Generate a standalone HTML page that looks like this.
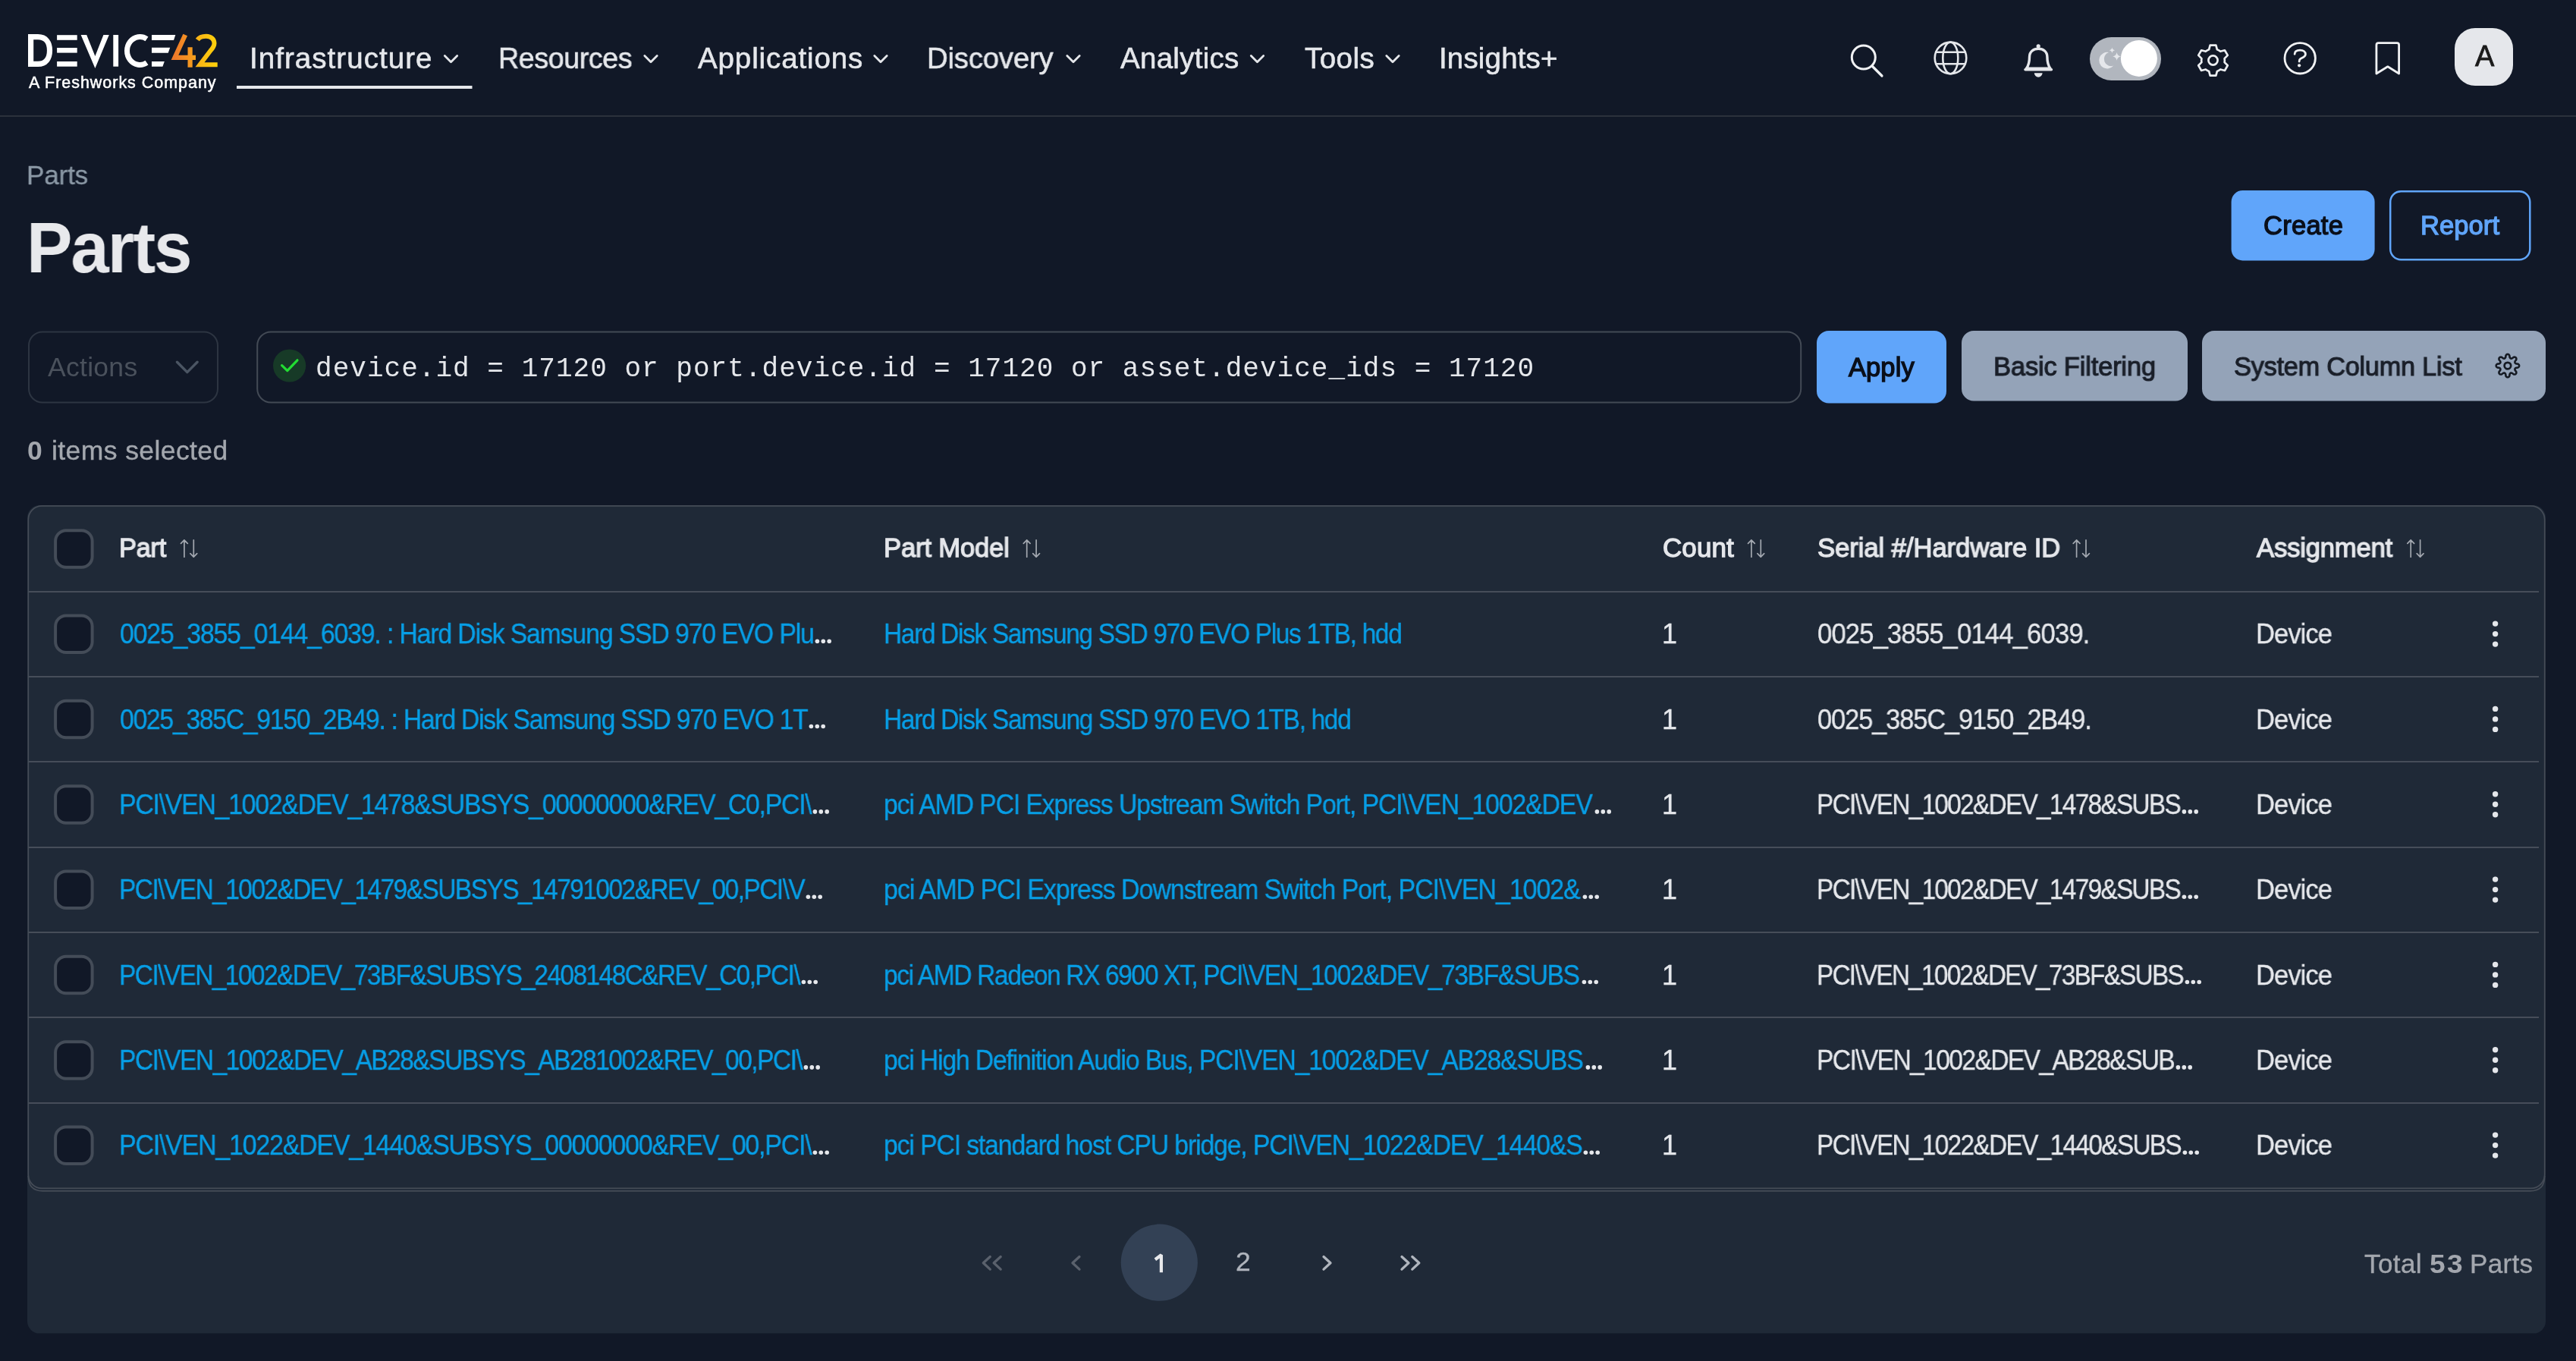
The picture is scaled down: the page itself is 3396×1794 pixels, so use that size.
<!DOCTYPE html>
<html><head><meta charset="utf-8"><title>Parts</title>
<style>
html,body{margin:0;padding:0;background:#111827;width:3396px;height:1794px;overflow:hidden}
.s{position:absolute;left:0;top:0}
.t{position:absolute;white-space:pre;will-change:transform}
</style></head><body>
<svg class="s" width="3396" height="1794" viewBox="0 0 3396 1794"><rect x="0" y="152" width="3396" height="2" fill="#2b313c"/>
<rect x="312" y="113" width="310.5" height="4" fill="#e5e7eb"/>
<path d="M586.3 73.6 L594.5 81.8 L602.7 73.6" fill="none" stroke="#e5e7eb" stroke-width="2.8" stroke-linecap="round" stroke-linejoin="round"/>
<path d="M849.8 73.6 L858.0 81.8 L866.2 73.6" fill="none" stroke="#e5e7eb" stroke-width="2.8" stroke-linecap="round" stroke-linejoin="round"/>
<path d="M1152.8 73.6 L1161.0 81.8 L1169.2 73.6" fill="none" stroke="#e5e7eb" stroke-width="2.8" stroke-linecap="round" stroke-linejoin="round"/>
<path d="M1406.8 73.6 L1415.0 81.8 L1423.2 73.6" fill="none" stroke="#e5e7eb" stroke-width="2.8" stroke-linecap="round" stroke-linejoin="round"/>
<path d="M1649.3 73.6 L1657.5 81.8 L1665.7 73.6" fill="none" stroke="#e5e7eb" stroke-width="2.8" stroke-linecap="round" stroke-linejoin="round"/>
<path d="M1827.8 73.6 L1836.0 81.8 L1844.2 73.6" fill="none" stroke="#e5e7eb" stroke-width="2.8" stroke-linecap="round" stroke-linejoin="round"/>
<path d="M40.6 48.7 L50 48.7 C60.5 48.7 65.5 56 65.5 66.5 C65.5 77 60.5 84.4 50 84.4 L40.6 84.4 Z" fill="none" stroke="#ffffff" stroke-width="7.2"/>
<rect x="75.1" y="46.2" width="26.6" height="6.6" fill="#ffffff"/><rect x="75.1" y="63" width="26.6" height="6.6" fill="#ffffff"/><rect x="75.1" y="81" width="26.6" height="6.7" fill="#ffffff"/>
<polygon points="106.6,46 114.2,46 125.4,74 136.4,46 143.8,46 125.4,90" fill="#ffffff"/>
<rect x="149.3" y="46" width="6.8" height="41.7" fill="#ffffff"/>
<path d="M193.5 51.3 A17 18.5 0 1 0 193.5 82.7" fill="none" stroke="#ffffff" stroke-width="7"/>
<polygon points="200,45.9 231.3,45.9 229,52.9 200,52.9" fill="#ffffff"/><polygon points="200,62.7 224.2,62.7 221.7,69.8 200,69.8" fill="#ffffff"/><polygon points="200,80.9 216.8,80.9 214.4,87.7 200,87.7" fill="#ffffff"/>
<defs><linearGradient id="lg4" x1="0" y1="0" x2="1" y2="0"><stop offset="0" stop-color="#ef7a2a"/><stop offset="1" stop-color="#f7a21c"/></linearGradient><linearGradient id="lg2" x1="0" y1="0" x2="1" y2="0"><stop offset="0" stop-color="#f9b316"/><stop offset="1" stop-color="#fdd20b"/></linearGradient></defs>
<path d="M244.2 46 L230.5 75.8 L258 75.8 M250.6 62.2 L250.6 88.8" fill="none" stroke="url(#lg4)" stroke-width="6.2" stroke-linejoin="miter"/>
<path d="M260.3 52.5 C263 48.5 267 47.8 271.8 47.8 C278.5 47.8 282.5 52 282.5 57 C282.5 61 280.5 63.5 277.5 66.8 L263.5 85.3 L286.7 85.3" fill="none" stroke="url(#lg2)" stroke-width="6" stroke-linejoin="miter"/>
<circle cx="2456.8" cy="75.6" r="15.5" fill="none" stroke="#f0f1f3" stroke-width="3"/><path d="M2468 87 L2481 100" stroke="#f0f1f3" stroke-width="3.2" stroke-linecap="round"/>
<circle cx="2571.5" cy="76.4" r="20.8" fill="none" stroke="#e5e7eb" stroke-width="2.6"/><ellipse cx="2571.3" cy="76.4" rx="10" ry="20.8" fill="none" stroke="#e5e7eb" stroke-width="2.6"/><path d="M2551.5 68.8 H2591.5 M2551.5 84.2 H2591.5" stroke="#e5e7eb" stroke-width="2.6"/>
<circle cx="2687.2" cy="60.8" r="2.6" fill="#e5e7eb"/><path d="M2671.3 90.3 C2674.8 86 2675.5 81.5 2675.5 75 C2675.5 68 2680.8 64.2 2687.2 64.2 C2693.6 64.2 2698.9 68 2698.9 75 C2698.9 81.5 2699.6 86 2703.1 90.3 Z" fill="none" stroke="#e5e7eb" stroke-width="3.4" stroke-linejoin="round"/><path d="M2670 91.8 H2704.4" stroke="#e5e7eb" stroke-width="3.6" stroke-linecap="round"/><path d="M2681.8 96.3 A5.4 5.4 0 0 0 2692.6 96.3 Z" fill="#e5e7eb"/>
<rect x="2755" y="49" width="94" height="57" rx="28.5" fill="#b1b6be"/><circle cx="2819.9" cy="76.9" r="24" fill="#ffffff"/>
<path d="M2780 69 A10.8 10.8 0 1 0 2786.3 86.6 A9.2 9.2 0 0 1 2780 69 Z" fill="#e5e7eb"/>
<path d="M2784.4 62.599999999999994 Q2784.918 65.782 2788.1 66.3 Q2784.918 66.818 2784.4 70.0 Q2783.882 66.818 2780.7000000000003 66.3 Q2783.882 65.782 2784.4 62.599999999999994Z" fill="#e5e7eb"/>
<path d="M2790.6 69.0 Q2791.3559999999998 73.644 2796.0 74.4 Q2791.3559999999998 75.156 2790.6 79.80000000000001 Q2789.844 75.156 2785.2 74.4 Q2789.844 73.644 2790.6 69.0Z" fill="#e5e7eb"/>
<path d="M2912.11 65.28 L2913.65 59.57 L2921.35 59.57 L2922.89 65.28 A15.3 15.3 0 0 1 2927.21 67.77 L2932.92 66.25 L2936.78 72.92 L2932.60 77.11 A15.3 15.3 0 0 1 2932.60 82.09 L2936.78 86.28 L2932.92 92.95 L2927.21 91.43 A15.3 15.3 0 0 1 2922.89 93.92 L2921.35 99.63 L2913.65 99.63 L2912.11 93.92 A15.3 15.3 0 0 1 2907.79 91.43 L2902.08 92.95 L2898.22 86.28 L2902.40 82.09 A15.3 15.3 0 0 1 2902.40 77.11 L2898.22 72.92 L2902.08 66.25 L2907.79 67.77 A15.3 15.3 0 0 1 2912.11 65.28Z" fill="none" stroke="#eceef1" stroke-width="2.7" stroke-linejoin="round"/><circle cx="2917.5" cy="79.5" r="6.1" fill="none" stroke="#eceef1" stroke-width="2.7"/>
<circle cx="3032.2" cy="76.8" r="20.2" fill="none" stroke="#f0f1f3" stroke-width="2.8"/><path d="M3025.1 71.3 C3025.1 67.3 3028 66.2 3032.2 66.2 C3036.5 66.2 3039.4 68.3 3039.4 71.4 C3039.4 74.6 3036 75.5 3033 77.3 C3031.6 78.1 3031.1 79.2 3031.1 81" fill="none" stroke="#f0f1f3" stroke-width="2.8" stroke-linecap="round"/><circle cx="3031.1" cy="86.3" r="2.1" fill="#f0f1f3"/>
<path d="M3132.9 97 L3132.9 59.2 Q3132.9 56.6 3135.5 56.6 L3160 56.6 Q3162.6 56.6 3162.6 59.2 L3162.6 97 L3147.8 87.8 Z" fill="none" stroke="#f0f1f3" stroke-width="2.8" stroke-linejoin="round"/>
<rect x="3236" y="37" width="77" height="76" rx="27" fill="#e5e7eb"/>
<rect x="2941.6" y="251" width="189" height="92.4" rx="15" fill="#60a5fa"/>
<rect x="3151.2" y="252.2" width="184.1" height="90" rx="14" fill="none" stroke="#60a5fa" stroke-width="2.5"/>
<rect x="38" y="437.5" width="249" height="93" rx="18" fill="none" stroke="#2d3542" stroke-width="2"/>
<path d="M233.5 477.3 L246.8 490.6 L260.1 477.3" fill="none" stroke="#4b5563" stroke-width="3.4" stroke-linecap="round" stroke-linejoin="round"/>
<rect x="339.2" y="437.5" width="2035" height="93" rx="18" fill="none" stroke="#434a55" stroke-width="2"/>
<circle cx="381.6" cy="482" r="21.6" fill="#173a27"/><path d="M371.6 481.6 L378.8 488.6 L392 474.8" fill="none" stroke="#22dd33" stroke-width="3.2" stroke-linecap="round" stroke-linejoin="round"/>
<rect x="2395" y="436" width="171" height="95.5" rx="16" fill="#60a5fa"/>
<rect x="2586" y="436" width="298" height="92.5" rx="16" fill="#94a3b8"/>
<rect x="2903" y="436" width="453" height="92.5" rx="16" fill="#94a3b8"/>
<path d="M3321.10 482.10 L3321.05 482.58 L3320.90 483.04 L3320.65 483.49 L3320.29 483.92 L3319.78 484.30 L3318.99 484.60 L3317.46 484.68 L3316.84 484.91 L3316.39 485.15 L3316.04 485.40 L3315.77 485.65 L3315.58 485.93 L3315.45 486.23 L3315.40 486.57 L3315.40 486.94 L3315.47 487.36 L3315.63 487.85 L3315.90 488.45 L3316.92 489.59 L3317.27 490.36 L3317.36 490.99 L3317.32 491.54 L3317.18 492.04 L3316.95 492.48 L3316.65 492.85 L3316.28 493.15 L3315.84 493.38 L3315.34 493.52 L3314.79 493.56 L3314.16 493.47 L3313.39 493.12 L3312.25 492.10 L3311.65 491.83 L3311.16 491.67 L3310.74 491.60 L3310.37 491.60 L3310.03 491.65 L3309.73 491.78 L3309.45 491.97 L3309.20 492.24 L3308.95 492.59 L3308.71 493.04 L3308.48 493.66 L3308.40 495.19 L3308.10 495.98 L3307.72 496.49 L3307.29 496.85 L3306.84 497.10 L3306.38 497.25 L3305.90 497.30 L3305.42 497.25 L3304.96 497.10 L3304.51 496.85 L3304.08 496.49 L3303.70 495.98 L3303.40 495.19 L3303.32 493.66 L3303.09 493.04 L3302.85 492.59 L3302.60 492.24 L3302.35 491.97 L3302.07 491.78 L3301.77 491.65 L3301.43 491.60 L3301.06 491.60 L3300.64 491.67 L3300.15 491.83 L3299.55 492.10 L3298.41 493.12 L3297.64 493.47 L3297.01 493.56 L3296.46 493.52 L3295.96 493.38 L3295.52 493.15 L3295.15 492.85 L3294.85 492.48 L3294.62 492.04 L3294.48 491.54 L3294.44 490.99 L3294.53 490.36 L3294.88 489.59 L3295.90 488.45 L3296.17 487.85 L3296.33 487.36 L3296.40 486.94 L3296.40 486.57 L3296.35 486.23 L3296.22 485.93 L3296.03 485.65 L3295.76 485.40 L3295.41 485.15 L3294.96 484.91 L3294.34 484.68 L3292.81 484.60 L3292.02 484.30 L3291.51 483.92 L3291.15 483.49 L3290.90 483.04 L3290.75 482.58 L3290.70 482.10 L3290.75 481.62 L3290.90 481.16 L3291.15 480.71 L3291.51 480.28 L3292.02 479.90 L3292.81 479.60 L3294.34 479.52 L3294.96 479.29 L3295.41 479.05 L3295.76 478.80 L3296.03 478.55 L3296.22 478.27 L3296.35 477.97 L3296.40 477.63 L3296.40 477.26 L3296.33 476.84 L3296.17 476.35 L3295.90 475.75 L3294.88 474.61 L3294.53 473.84 L3294.44 473.21 L3294.48 472.66 L3294.62 472.16 L3294.85 471.72 L3295.15 471.35 L3295.52 471.05 L3295.96 470.82 L3296.46 470.68 L3297.01 470.64 L3297.64 470.73 L3298.41 471.08 L3299.55 472.10 L3300.15 472.37 L3300.64 472.53 L3301.06 472.60 L3301.43 472.60 L3301.77 472.55 L3302.07 472.42 L3302.35 472.23 L3302.60 471.96 L3302.85 471.61 L3303.09 471.16 L3303.32 470.54 L3303.40 469.01 L3303.70 468.22 L3304.08 467.71 L3304.51 467.35 L3304.96 467.10 L3305.42 466.95 L3305.90 466.90 L3306.38 466.95 L3306.84 467.10 L3307.29 467.35 L3307.72 467.71 L3308.10 468.22 L3308.40 469.01 L3308.48 470.54 L3308.71 471.16 L3308.95 471.61 L3309.20 471.96 L3309.45 472.23 L3309.73 472.42 L3310.03 472.55 L3310.37 472.60 L3310.74 472.60 L3311.16 472.53 L3311.65 472.37 L3312.25 472.10 L3313.39 471.08 L3314.16 470.73 L3314.79 470.64 L3315.34 470.68 L3315.84 470.82 L3316.28 471.05 L3316.65 471.35 L3316.95 471.72 L3317.18 472.16 L3317.32 472.66 L3317.36 473.21 L3317.27 473.84 L3316.92 474.61 L3315.90 475.75 L3315.63 476.35 L3315.47 476.84 L3315.40 477.26 L3315.40 477.63 L3315.45 477.97 L3315.58 478.27 L3315.77 478.55 L3316.04 478.80 L3316.39 479.05 L3316.84 479.29 L3317.46 479.52 L3318.99 479.60 L3319.78 479.90 L3320.29 480.28 L3320.65 480.71 L3320.90 481.16 L3321.05 481.62Z" fill="none" stroke="#161b24" stroke-width="2.6" stroke-linejoin="round"/><circle cx="3305.9" cy="482.1" r="4.3" fill="none" stroke="#161b24" stroke-width="2.7"/>
<rect x="36" y="666" width="3320" height="1091.6" rx="16" fill="#1f2937"/>
<rect x="37.3" y="666.8" width="3317.4" height="899.5" rx="18" fill="none" stroke="#454c57" stroke-width="1.7"/>
<path d="M37.3 1550 Q37.3 1569.8 56 1569.8 H3336 Q3354.7 1569.8 3354.7 1550" fill="none" stroke="#454c57" stroke-width="1.7"/>
<rect x="38" y="779" width="3309" height="2" fill="#464d59"/>
<rect x="38" y="891" width="3309" height="2" fill="#464d59"/>
<rect x="38" y="1003" width="3309" height="2" fill="#464d59"/>
<rect x="38" y="1116" width="3309" height="2" fill="#464d59"/>
<rect x="38" y="1228" width="3309" height="2" fill="#464d59"/>
<rect x="38" y="1340" width="3309" height="2" fill="#464d59"/>
<rect x="38" y="1453" width="3309" height="2" fill="#464d59"/>
<rect x="73.1" y="699.2" width="48.5" height="48.5" rx="14" fill="#111827" stroke="#444c58" stroke-width="4"/>
<rect x="73.1" y="811.5" width="48.5" height="48.5" rx="14" fill="#111827" stroke="#444c58" stroke-width="4"/>
<rect x="73.1" y="923.8" width="48.5" height="48.5" rx="14" fill="#111827" stroke="#444c58" stroke-width="4"/>
<rect x="73.1" y="1036.2" width="48.5" height="48.5" rx="14" fill="#111827" stroke="#444c58" stroke-width="4"/>
<rect x="73.1" y="1148.5" width="48.5" height="48.5" rx="14" fill="#111827" stroke="#444c58" stroke-width="4"/>
<rect x="73.1" y="1260.8" width="48.5" height="48.5" rx="14" fill="#111827" stroke="#444c58" stroke-width="4"/>
<rect x="73.1" y="1373.2" width="48.5" height="48.5" rx="14" fill="#111827" stroke="#444c58" stroke-width="4"/>
<rect x="73.1" y="1485.5" width="48.5" height="48.5" rx="14" fill="#111827" stroke="#444c58" stroke-width="4"/>
<path d="M242.89999999999998 711.8 V734.2 M238.49999999999997 716.4 L242.89999999999998 711.8 L247.29999999999998 716.4 M255.29999999999998 711.8 V734.2 M250.89999999999998 729.6 L255.29999999999998 734.2 L259.7 729.6" fill="none" stroke="#a3a8b0" stroke-width="1.7" stroke-linecap="round" stroke-linejoin="round"/>
<path d="M1353.7 711.8 V734.2 M1349.3 716.4 L1353.7 711.8 L1358.1000000000001 716.4 M1366.1 711.8 V734.2 M1361.6999999999998 729.6 L1366.1 734.2 L1370.5 729.6" fill="none" stroke="#a3a8b0" stroke-width="1.7" stroke-linecap="round" stroke-linejoin="round"/>
<path d="M2308.8999999999996 711.8 V734.2 M2304.4999999999995 716.4 L2308.8999999999996 711.8 L2313.2999999999997 716.4 M2321.2999999999997 711.8 V734.2 M2316.8999999999996 729.6 L2321.2999999999997 734.2 L2325.7 729.6" fill="none" stroke="#a3a8b0" stroke-width="1.7" stroke-linecap="round" stroke-linejoin="round"/>
<path d="M2737.6 711.8 V734.2 M2733.2 716.4 L2737.6 711.8 L2742.0 716.4 M2750.0 711.8 V734.2 M2745.6 729.6 L2750.0 734.2 L2754.4 729.6" fill="none" stroke="#a3a8b0" stroke-width="1.7" stroke-linecap="round" stroke-linejoin="round"/>
<path d="M3178.2 711.8 V734.2 M3173.7999999999997 716.4 L3178.2 711.8 L3182.6 716.4 M3190.6 711.8 V734.2 M3186.2 729.6 L3190.6 734.2 L3195.0 729.6" fill="none" stroke="#a3a8b0" stroke-width="1.7" stroke-linecap="round" stroke-linejoin="round"/>
<circle cx="3289.6" cy="822.1" r="3.7" fill="#e5e7eb"/>
<circle cx="3289.6" cy="835.6" r="3.7" fill="#e5e7eb"/>
<circle cx="3289.6" cy="849.1" r="3.7" fill="#e5e7eb"/>
<circle cx="3289.6" cy="934.4" r="3.7" fill="#e5e7eb"/>
<circle cx="3289.6" cy="947.9" r="3.7" fill="#e5e7eb"/>
<circle cx="3289.6" cy="961.4" r="3.7" fill="#e5e7eb"/>
<circle cx="3289.6" cy="1046.8" r="3.7" fill="#e5e7eb"/>
<circle cx="3289.6" cy="1060.3" r="3.7" fill="#e5e7eb"/>
<circle cx="3289.6" cy="1073.8" r="3.7" fill="#e5e7eb"/>
<circle cx="3289.6" cy="1159.1" r="3.7" fill="#e5e7eb"/>
<circle cx="3289.6" cy="1172.6" r="3.7" fill="#e5e7eb"/>
<circle cx="3289.6" cy="1186.1" r="3.7" fill="#e5e7eb"/>
<circle cx="3289.6" cy="1271.4" r="3.7" fill="#e5e7eb"/>
<circle cx="3289.6" cy="1284.9" r="3.7" fill="#e5e7eb"/>
<circle cx="3289.6" cy="1298.4" r="3.7" fill="#e5e7eb"/>
<circle cx="3289.6" cy="1383.8" r="3.7" fill="#e5e7eb"/>
<circle cx="3289.6" cy="1397.2" r="3.7" fill="#e5e7eb"/>
<circle cx="3289.6" cy="1410.8" r="3.7" fill="#e5e7eb"/>
<circle cx="3289.6" cy="1496.1" r="3.7" fill="#e5e7eb"/>
<circle cx="3289.6" cy="1509.6" r="3.7" fill="#e5e7eb"/>
<circle cx="3289.6" cy="1523.1" r="3.7" fill="#e5e7eb"/>
<circle cx="1528.3" cy="1664.2" r="50.6" fill="#334155"/><path d="M1522.9 1660.3 L1530.9 1654.3 V1677.2" fill="none" stroke="#e8e9ec" stroke-width="4.2" stroke-linejoin="bevel"/>
<path d="M1305.3 1656.5 L1296.3 1664.8 L1305.3 1673.1" fill="none" stroke="#5a616c" stroke-width="3.3" stroke-linecap="round" stroke-linejoin="round"/>
<path d="M1319.2 1656.5 L1310.2 1664.8 L1319.2 1673.1" fill="none" stroke="#5a616c" stroke-width="3.3" stroke-linecap="round" stroke-linejoin="round"/>
<path d="M1423.0 1656.5 L1414.0 1664.8 L1423.0 1673.1" fill="none" stroke="#5a616c" stroke-width="3.3" stroke-linecap="round" stroke-linejoin="round"/>
<path d="M1745.0 1656.5 L1754.0 1664.8 L1745.0 1673.1" fill="none" stroke="#b0b5bd" stroke-width="3.3" stroke-linecap="round" stroke-linejoin="round"/>
<path d="M1848.0 1656.5 L1857.0 1664.8 L1848.0 1673.1" fill="none" stroke="#b0b5bd" stroke-width="3.3" stroke-linecap="round" stroke-linejoin="round"/>
<path d="M1861.8 1656.5 L1870.8 1664.8 L1861.8 1673.1" fill="none" stroke="#b0b5bd" stroke-width="3.3" stroke-linecap="round" stroke-linejoin="round"/></svg>
<div class=t style="left:329.00px;top:57.87px;font:normal 38.5px/38.5px 'Liberation Sans';color:#e5e7eb;letter-spacing:1.046px;-webkit-text-stroke:0.6px #e5e7eb">Infrastructure</div>
<div class=t style="left:656.56px;top:57.87px;font:normal 38.5px/38.5px 'Liberation Sans';color:#e5e7eb;letter-spacing:-0.464px;transform:scaleX(0.9798);transform-origin:0 0;-webkit-text-stroke:0.6px #e5e7eb">Resources</div>
<div class=t style="left:920.00px;top:57.87px;font:normal 38.5px/38.5px 'Liberation Sans';color:#e5e7eb;letter-spacing:0.878px;-webkit-text-stroke:0.6px #e5e7eb">Applications</div>
<div class=t style="left:1222.02px;top:57.87px;font:normal 38.5px/38.5px 'Liberation Sans';color:#e5e7eb;letter-spacing:-0.148px;transform:scaleX(0.9929);transform-origin:0 0;-webkit-text-stroke:0.6px #e5e7eb">Discovery</div>
<div class=t style="left:1477.00px;top:57.87px;font:normal 38.5px/38.5px 'Liberation Sans';color:#e5e7eb;letter-spacing:0.274px;-webkit-text-stroke:0.6px #e5e7eb">Analytics</div>
<div class=t style="left:1720.00px;top:57.87px;font:normal 38.5px/38.5px 'Liberation Sans';color:#e5e7eb;letter-spacing:0.443px;-webkit-text-stroke:0.6px #e5e7eb">Tools</div>
<div class=t style="left:1897.00px;top:57.87px;font:normal 38.5px/38.5px 'Liberation Sans';color:#e5e7eb;letter-spacing:0.165px;-webkit-text-stroke:0.6px #e5e7eb">Insights+</div>
<div class=t style="left:37.70px;top:98.72px;font:normal 21.5px/21.5px 'Liberation Sans';color:#ffffff;letter-spacing:0.966px;-webkit-text-stroke:0.5px #ffffff">A Freshworks Company</div>
<div class=t style="left:35.02px;top:214.32px;font:normal 35.5px/35.5px 'Liberation Sans';color:#8b98a5;letter-spacing:-0.203px;transform:scaleX(0.9900);transform-origin:0 0;-webkit-text-stroke:0.3px #8b98a5">Parts</div>
<div class=t style="left:34.72px;top:279.50px;font:bold 94px/94px 'Liberation Sans';color:#e8e9ec;letter-spacing:-2.122px;transform:scaleX(0.9638);transform-origin:0 0;">Parts</div>
<div class=t style="left:2984.10px;top:279.88px;font:normal 34.5px/34.5px 'Liberation Sans';color:#0a0f1a;letter-spacing:0.267px;-webkit-text-stroke:1.35px #0a0f1a">Create</div>
<div class=t style="left:3190.60px;top:279.88px;font:normal 34.5px/34.5px 'Liberation Sans';color:#60a5fa;letter-spacing:0.087px;-webkit-text-stroke:1.35px #60a5fa">Report</div>
<div class=t style="left:63.30px;top:467.12px;font:normal 35.5px/35.5px 'Liberation Sans';color:#4a515c;letter-spacing:0.289px;">Actions</div>
<div class=t style="left:416.30px;top:468.64px;font:normal 36px/36px 'Liberation Mono';color:#e5e7eb;letter-spacing:1.032px;">device.id = 17120 or port.device.id = 17120 or asset.device_ids = 17120</div>
<div class=t style="left:2437.00px;top:466.78px;font:normal 34.5px/34.5px 'Liberation Sans';color:#0a0f1a;letter-spacing:0.087px;-webkit-text-stroke:1.4px #0a0f1a">Apply</div>
<div class=t style="left:2627.83px;top:465.45px;font:normal 35px/35px 'Liberation Sans';color:#1a1f29;letter-spacing:-0.207px;transform:scaleX(0.9868);transform-origin:0 0;-webkit-text-stroke:1.1px #1a1f29">Basic Filtering</div>
<div class=t style="left:2944.52px;top:465.45px;font:normal 35px/35px 'Liberation Sans';color:#1a1f29;letter-spacing:-0.314px;transform:scaleX(0.9831);transform-origin:0 0;-webkit-text-stroke:1.1px #1a1f29">System Column List</div>
<div class=t style="left:36.00px;top:577.43px;font:bold 35.5px/35.5px 'Liberation Sans';color:#a3a7ae;letter-spacing:0.000px;">0</div>
<div class=t style="left:67.50px;top:577.23px;font:normal 35.5px/35.5px 'Liberation Sans';color:#a3a7ae;letter-spacing:0.411px;-webkit-text-stroke:0.4px #a3a7ae">items selected</div>
<div class=t style="left:3263.00px;top:55.00px;font:normal 38px/38px 'Liberation Sans';color:#1a1a1a;letter-spacing:0.000px;-webkit-text-stroke:0.8px #1a1a1a">A</div>
<div class=t style="left:157.03px;top:704.05px;font:normal 35px/35px 'Liberation Sans';color:#e5e7eb;letter-spacing:-0.350px;transform:scaleX(0.9835);transform-origin:0 0;-webkit-text-stroke:1.3px #e5e7eb">Part</div>
<div class=t style="left:1165.02px;top:704.05px;font:normal 35px/35px 'Liberation Sans';color:#e5e7eb;letter-spacing:-0.195px;transform:scaleX(0.9895);transform-origin:0 0;-webkit-text-stroke:1.3px #e5e7eb">Part Model</div>
<div class=t style="left:2192.00px;top:704.05px;font:normal 35px/35px 'Liberation Sans';color:#e5e7eb;letter-spacing:0.082px;-webkit-text-stroke:1.3px #e5e7eb">Count</div>
<div class=t style="left:2395.81px;top:704.05px;font:normal 35px/35px 'Liberation Sans';color:#e5e7eb;letter-spacing:-0.121px;transform:scaleX(0.9929);transform-origin:0 0;-webkit-text-stroke:1.3px #e5e7eb">Serial #/Hardware ID</div>
<div class=t style="left:2975.40px;top:704.05px;font:normal 35px/35px 'Liberation Sans';color:#e5e7eb;letter-spacing:-0.198px;transform:scaleX(0.9903);transform-origin:0 0;-webkit-text-stroke:1.3px #e5e7eb">Assignment</div>
<div class=t style="left:158.06px;top:818.40px;font:normal 36px/36px 'Liberation Sans';color:#079ee6;letter-spacing:-1.226px;transform:scaleX(0.9391);transform-origin:0 0;-webkit-text-stroke:0.35px #079ee6">0025_3855_0144_6039. : Hard Disk Samsung SSD 970 EVO Plu</div>
<div class=t style="left:1165.14px;top:818.40px;font:normal 36px/36px 'Liberation Sans';color:#079ee6;letter-spacing:-1.439px;transform:scaleX(0.9291);transform-origin:0 0;-webkit-text-stroke:0.35px #079ee6">Hard Disk Samsung SSD 970 EVO Plus 1TB, hdd</div>
<div class=t style="left:2191.00px;top:818.40px;font:normal 36px/36px 'Liberation Sans';color:#e5e7eb;letter-spacing:0.000px;-webkit-text-stroke:0.35px #e5e7eb">1</div>
<div class=t style="left:2396.04px;top:818.40px;font:normal 36px/36px 'Liberation Sans';color:#e5e7eb;letter-spacing:-0.847px;transform:scaleX(0.9600);transform-origin:0 0;-webkit-text-stroke:0.35px #e5e7eb">0025_3855_0144_6039.</div>
<div class=t style="left:2974.08px;top:818.40px;font:normal 36px/36px 'Liberation Sans';color:#e5e7eb;letter-spacing:-0.941px;transform:scaleX(0.9579);transform-origin:0 0;-webkit-text-stroke:0.35px #e5e7eb">Device</div>
<div class=t style="left:158.06px;top:930.73px;font:normal 36px/36px 'Liberation Sans';color:#079ee6;letter-spacing:-1.335px;transform:scaleX(0.9353);transform-origin:0 0;-webkit-text-stroke:0.35px #079ee6">0025_385C_9150_2B49. : Hard Disk Samsung SSD 970 EVO 1T</div>
<div class=t style="left:1165.14px;top:930.73px;font:normal 36px/36px 'Liberation Sans';color:#079ee6;letter-spacing:-1.443px;transform:scaleX(0.9303);transform-origin:0 0;-webkit-text-stroke:0.35px #079ee6">Hard Disk Samsung SSD 970 EVO 1TB, hdd</div>
<div class=t style="left:2191.00px;top:930.73px;font:normal 36px/36px 'Liberation Sans';color:#e5e7eb;letter-spacing:0.000px;-webkit-text-stroke:0.35px #e5e7eb">1</div>
<div class=t style="left:2396.05px;top:930.73px;font:normal 36px/36px 'Liberation Sans';color:#e5e7eb;letter-spacing:-1.061px;transform:scaleX(0.9516);transform-origin:0 0;-webkit-text-stroke:0.35px #e5e7eb">0025_385C_9150_2B49.</div>
<div class=t style="left:2974.08px;top:930.73px;font:normal 36px/36px 'Liberation Sans';color:#e5e7eb;letter-spacing:-0.941px;transform:scaleX(0.9579);transform-origin:0 0;-webkit-text-stroke:0.35px #e5e7eb">Device</div>
<div class=t style="left:157.12px;top:1043.06px;font:normal 36px/36px 'Liberation Sans';color:#079ee6;letter-spacing:-1.360px;transform:scaleX(0.9406);transform-origin:0 0;-webkit-text-stroke:0.35px #079ee6">PCI\VEN_1002&amp;DEV_1478&amp;SUBSYS_00000000&amp;REV_C0,PCI\</div>
<div class=t style="left:1165.12px;top:1043.06px;font:normal 36px/36px 'Liberation Sans';color:#079ee6;letter-spacing:-1.210px;transform:scaleX(0.9391);transform-origin:0 0;-webkit-text-stroke:0.35px #079ee6">pci AMD PCI Express Upstream Switch Port, PCI\VEN_1002&amp;DEV</div>
<div class=t style="left:2191.00px;top:1043.06px;font:normal 36px/36px 'Liberation Sans';color:#e5e7eb;letter-spacing:0.000px;-webkit-text-stroke:0.35px #e5e7eb">1</div>
<div class=t style="left:2395.15px;top:1043.06px;font:normal 36px/36px 'Liberation Sans';color:#e5e7eb;letter-spacing:-1.802px;transform:scaleX(0.9257);transform-origin:0 0;-webkit-text-stroke:0.35px #e5e7eb">PCI\VEN_1002&amp;DEV_1478&amp;SUBS</div>
<div class=t style="left:2974.08px;top:1043.06px;font:normal 36px/36px 'Liberation Sans';color:#e5e7eb;letter-spacing:-0.941px;transform:scaleX(0.9579);transform-origin:0 0;-webkit-text-stroke:0.35px #e5e7eb">Device</div>
<div class=t style="left:157.14px;top:1155.39px;font:normal 36px/36px 'Liberation Sans';color:#079ee6;letter-spacing:-1.646px;transform:scaleX(0.9288);transform-origin:0 0;-webkit-text-stroke:0.35px #079ee6">PCI\VEN_1002&amp;DEV_1479&amp;SUBSYS_14791002&amp;REV_00,PCI\V</div>
<div class=t style="left:1165.11px;top:1155.39px;font:normal 36px/36px 'Liberation Sans';color:#079ee6;letter-spacing:-1.113px;transform:scaleX(0.9433);transform-origin:0 0;-webkit-text-stroke:0.35px #079ee6">pci AMD PCI Express Downstream Switch Port, PCI\VEN_1002&amp;</div>
<div class=t style="left:2191.00px;top:1155.39px;font:normal 36px/36px 'Liberation Sans';color:#e5e7eb;letter-spacing:0.000px;-webkit-text-stroke:0.35px #e5e7eb">1</div>
<div class=t style="left:2395.15px;top:1155.39px;font:normal 36px/36px 'Liberation Sans';color:#e5e7eb;letter-spacing:-1.802px;transform:scaleX(0.9257);transform-origin:0 0;-webkit-text-stroke:0.35px #e5e7eb">PCI\VEN_1002&amp;DEV_1479&amp;SUBS</div>
<div class=t style="left:2974.08px;top:1155.39px;font:normal 36px/36px 'Liberation Sans';color:#e5e7eb;letter-spacing:-0.941px;transform:scaleX(0.9579);transform-origin:0 0;-webkit-text-stroke:0.35px #e5e7eb">Device</div>
<div class=t style="left:157.14px;top:1267.72px;font:normal 36px/36px 'Liberation Sans';color:#079ee6;letter-spacing:-1.680px;transform:scaleX(0.9284);transform-origin:0 0;-webkit-text-stroke:0.35px #079ee6">PCI\VEN_1002&amp;DEV_73BF&amp;SUBSYS_2408148C&amp;REV_C0,PCI\</div>
<div class=t style="left:1165.14px;top:1267.72px;font:normal 36px/36px 'Liberation Sans';color:#079ee6;letter-spacing:-1.492px;transform:scaleX(0.9319);transform-origin:0 0;-webkit-text-stroke:0.35px #079ee6">pci AMD Radeon RX 6900 XT, PCI\VEN_1002&amp;DEV_73BF&amp;SUBS</div>
<div class=t style="left:2191.00px;top:1267.72px;font:normal 36px/36px 'Liberation Sans';color:#e5e7eb;letter-spacing:0.000px;-webkit-text-stroke:0.35px #e5e7eb">1</div>
<div class=t style="left:2395.15px;top:1267.72px;font:normal 36px/36px 'Liberation Sans';color:#e5e7eb;letter-spacing:-1.847px;transform:scaleX(0.9247);transform-origin:0 0;-webkit-text-stroke:0.35px #e5e7eb">PCI\VEN_1002&amp;DEV_73BF&amp;SUBS</div>
<div class=t style="left:2974.08px;top:1267.72px;font:normal 36px/36px 'Liberation Sans';color:#e5e7eb;letter-spacing:-0.941px;transform:scaleX(0.9579);transform-origin:0 0;-webkit-text-stroke:0.35px #e5e7eb">Device</div>
<div class=t style="left:157.14px;top:1380.05px;font:normal 36px/36px 'Liberation Sans';color:#079ee6;letter-spacing:-1.621px;transform:scaleX(0.9307);transform-origin:0 0;-webkit-text-stroke:0.35px #079ee6">PCI\VEN_1002&amp;DEV_AB28&amp;SUBSYS_AB281002&amp;REV_00,PCI\</div>
<div class=t style="left:1165.12px;top:1380.05px;font:normal 36px/36px 'Liberation Sans';color:#079ee6;letter-spacing:-1.254px;transform:scaleX(0.9375);transform-origin:0 0;-webkit-text-stroke:0.35px #079ee6">pci High Definition Audio Bus, PCI\VEN_1002&amp;DEV_AB28&amp;SUBS</div>
<div class=t style="left:2191.00px;top:1380.05px;font:normal 36px/36px 'Liberation Sans';color:#e5e7eb;letter-spacing:0.000px;-webkit-text-stroke:0.35px #e5e7eb">1</div>
<div class=t style="left:2395.14px;top:1380.05px;font:normal 36px/36px 'Liberation Sans';color:#e5e7eb;letter-spacing:-1.687px;transform:scaleX(0.9309);transform-origin:0 0;-webkit-text-stroke:0.35px #e5e7eb">PCI\VEN_1002&amp;DEV_AB28&amp;SUB</div>
<div class=t style="left:2974.08px;top:1380.05px;font:normal 36px/36px 'Liberation Sans';color:#e5e7eb;letter-spacing:-0.941px;transform:scaleX(0.9579);transform-origin:0 0;-webkit-text-stroke:0.35px #e5e7eb">Device</div>
<div class=t style="left:157.11px;top:1492.38px;font:normal 36px/36px 'Liberation Sans';color:#079ee6;letter-spacing:-1.291px;transform:scaleX(0.9432);transform-origin:0 0;-webkit-text-stroke:0.35px #079ee6">PCI\VEN_1022&amp;DEV_1440&amp;SUBSYS_00000000&amp;REV_00,PCI\</div>
<div class=t style="left:1165.12px;top:1492.38px;font:normal 36px/36px 'Liberation Sans';color:#079ee6;letter-spacing:-1.224px;transform:scaleX(0.9386);transform-origin:0 0;-webkit-text-stroke:0.35px #079ee6">pci PCI standard host CPU bridge, PCI\VEN_1022&amp;DEV_1440&amp;S</div>
<div class=t style="left:2191.00px;top:1492.38px;font:normal 36px/36px 'Liberation Sans';color:#e5e7eb;letter-spacing:0.000px;-webkit-text-stroke:0.35px #e5e7eb">1</div>
<div class=t style="left:2395.15px;top:1492.38px;font:normal 36px/36px 'Liberation Sans';color:#e5e7eb;letter-spacing:-1.779px;transform:scaleX(0.9266);transform-origin:0 0;-webkit-text-stroke:0.35px #e5e7eb">PCI\VEN_1022&amp;DEV_1440&amp;SUBS</div>
<div class=t style="left:2974.08px;top:1492.38px;font:normal 36px/36px 'Liberation Sans';color:#e5e7eb;letter-spacing:-0.941px;transform:scaleX(0.9579);transform-origin:0 0;-webkit-text-stroke:0.35px #e5e7eb">Device</div>
<div class=t style="left:1629.40px;top:1646.03px;font:normal 35.5px/35.5px 'Liberation Sans';color:#b0b5bd;letter-spacing:0.000px;-webkit-text-stroke:0.3px #b0b5bd">2</div>
<div class=t style="left:3117.20px;top:1647.85px;font:normal 35px/35px 'Liberation Sans';color:#a3a7ae;letter-spacing:0.411px;-webkit-text-stroke:0.4px #a3a7ae">Total</div>
<div class=t style="left:3202.94px;top:1647.85px;font:bold 35px/35px 'Liberation Sans';color:#a3a7ae;letter-spacing:2.138px;transform:scaleX(1.0605);transform-origin:0 0;">53</div>
<div class=t style="left:3256.20px;top:1647.85px;font:normal 35px/35px 'Liberation Sans';color:#a3a7ae;letter-spacing:0.328px;-webkit-text-stroke:0.4px #a3a7ae">Parts</div>
<svg class="s" width="3396" height="1794" viewBox="0 0 3396 1794"><circle cx="1077.4" cy="845.2" r="2.8" fill="#e5e7eb"/><circle cx="1085.3" cy="845.2" r="2.8" fill="#e5e7eb"/><circle cx="1093.2" cy="845.2" r="2.8" fill="#e5e7eb"/><circle cx="1069.4" cy="957.5" r="2.8" fill="#e5e7eb"/><circle cx="1077.3" cy="957.5" r="2.8" fill="#e5e7eb"/><circle cx="1085.2" cy="957.5" r="2.8" fill="#e5e7eb"/><circle cx="1074.4" cy="1069.9" r="2.8" fill="#e5e7eb"/><circle cx="1082.3" cy="1069.9" r="2.8" fill="#e5e7eb"/><circle cx="1090.2" cy="1069.9" r="2.8" fill="#e5e7eb"/><circle cx="2105.4" cy="1069.9" r="2.8" fill="#e5e7eb"/><circle cx="2113.3" cy="1069.9" r="2.8" fill="#e5e7eb"/><circle cx="2121.2" cy="1069.9" r="2.8" fill="#e5e7eb"/><circle cx="2879.4" cy="1069.9" r="2.8" fill="#e5e7eb"/><circle cx="2887.3" cy="1069.9" r="2.8" fill="#e5e7eb"/><circle cx="2895.2" cy="1069.9" r="2.8" fill="#e5e7eb"/><circle cx="1065.4" cy="1182.2" r="2.8" fill="#e5e7eb"/><circle cx="1073.3" cy="1182.2" r="2.8" fill="#e5e7eb"/><circle cx="1081.2" cy="1182.2" r="2.8" fill="#e5e7eb"/><circle cx="2089.4" cy="1182.2" r="2.8" fill="#e5e7eb"/><circle cx="2097.3" cy="1182.2" r="2.8" fill="#e5e7eb"/><circle cx="2105.2" cy="1182.2" r="2.8" fill="#e5e7eb"/><circle cx="2879.4" cy="1182.2" r="2.8" fill="#e5e7eb"/><circle cx="2887.3" cy="1182.2" r="2.8" fill="#e5e7eb"/><circle cx="2895.2" cy="1182.2" r="2.8" fill="#e5e7eb"/><circle cx="1059.4" cy="1294.5" r="2.8" fill="#e5e7eb"/><circle cx="1067.3" cy="1294.5" r="2.8" fill="#e5e7eb"/><circle cx="1075.2" cy="1294.5" r="2.8" fill="#e5e7eb"/><circle cx="2088.4" cy="1294.5" r="2.8" fill="#e5e7eb"/><circle cx="2096.3" cy="1294.5" r="2.8" fill="#e5e7eb"/><circle cx="2104.2" cy="1294.5" r="2.8" fill="#e5e7eb"/><circle cx="2883.4" cy="1294.5" r="2.8" fill="#e5e7eb"/><circle cx="2891.3" cy="1294.5" r="2.8" fill="#e5e7eb"/><circle cx="2899.2" cy="1294.5" r="2.8" fill="#e5e7eb"/><circle cx="1062.4" cy="1406.9" r="2.8" fill="#e5e7eb"/><circle cx="1070.3" cy="1406.9" r="2.8" fill="#e5e7eb"/><circle cx="1078.2" cy="1406.9" r="2.8" fill="#e5e7eb"/><circle cx="2093.4" cy="1406.9" r="2.8" fill="#e5e7eb"/><circle cx="2101.3" cy="1406.9" r="2.8" fill="#e5e7eb"/><circle cx="2109.2" cy="1406.9" r="2.8" fill="#e5e7eb"/><circle cx="2871.4" cy="1406.9" r="2.8" fill="#e5e7eb"/><circle cx="2879.3" cy="1406.9" r="2.8" fill="#e5e7eb"/><circle cx="2887.2" cy="1406.9" r="2.8" fill="#e5e7eb"/><circle cx="1074.4" cy="1519.2" r="2.8" fill="#e5e7eb"/><circle cx="1082.3" cy="1519.2" r="2.8" fill="#e5e7eb"/><circle cx="1090.2" cy="1519.2" r="2.8" fill="#e5e7eb"/><circle cx="2090.4" cy="1519.2" r="2.8" fill="#e5e7eb"/><circle cx="2098.3" cy="1519.2" r="2.8" fill="#e5e7eb"/><circle cx="2106.2" cy="1519.2" r="2.8" fill="#e5e7eb"/><circle cx="2880.4" cy="1519.2" r="2.8" fill="#e5e7eb"/><circle cx="2888.3" cy="1519.2" r="2.8" fill="#e5e7eb"/><circle cx="2896.2" cy="1519.2" r="2.8" fill="#e5e7eb"/></svg>
</body></html>
